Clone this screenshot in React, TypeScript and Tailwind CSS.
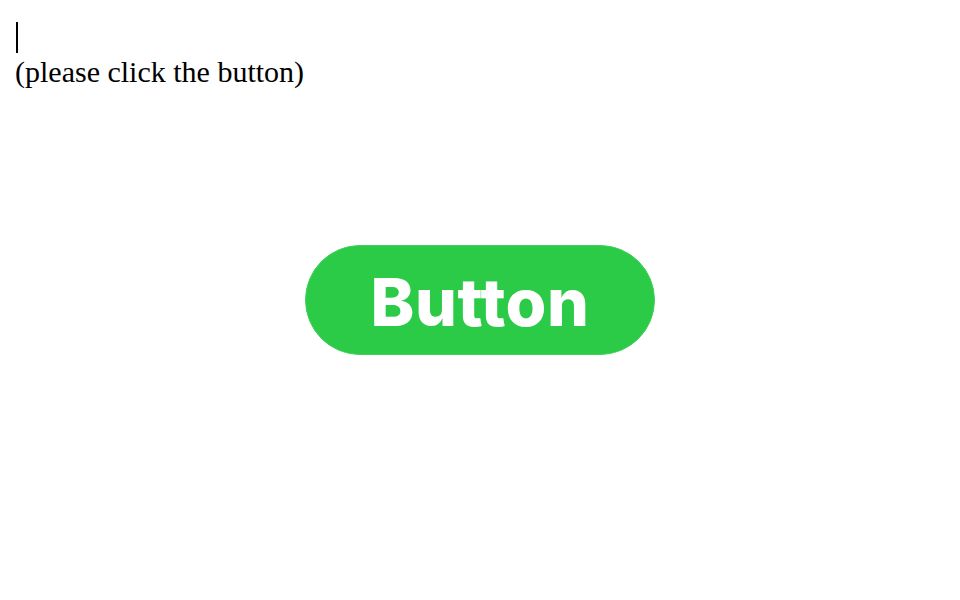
export default function App() {
  return (
    <div className="h-[600px] w-[960px] bg-white px-[15px] pt-[21px] font-['Liberation_Serif',serif] text-[30px] text-black">
      {/* output line with caret, then the hint */}
      <div className="flex h-[34px] items-start pl-px pt-px">
        <span className="h-[31px] w-[1.5px] bg-black" />
      </div>
      <div className="leading-[34px]">(please click the button)</div>

      <div className="mt-[156px] flex justify-center">
        <button
          type="button"
          className="flex h-[110px] w-[350px] items-center justify-center rounded-full border border-[#3fcf57] bg-[#2bcb48] pt-[4px] font-['Inter',sans-serif] text-[66px] font-extrabold tracking-[0.5px] text-white"
        >
          Button
        </button>
      </div>
    </div>
  );
}
